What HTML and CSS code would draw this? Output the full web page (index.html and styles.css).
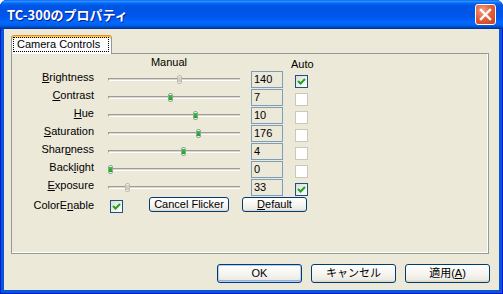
FILE: index.html
```html
<!DOCTYPE html>
<html lang="ja">
<head>
<meta charset="utf-8">
<link rel="stylesheet" href="styles.css">
</head>
<body>
<div class="window">
  <div class="titlebar">
    <span class="title">TC-300のプロパティ</span>
    <span class="close">
      <svg width="21" height="21" viewBox="0 0 21 21">
        <path d="M6 6 L15 15 M15 6 L6 15" stroke="#fff" stroke-width="2.4" stroke-linecap="square" fill="none"/>
      </svg>
    </span>
  </div>
  <div class="client">
    <div class="tabstrip">
      <div class="tab"><span class="tab-label">Camera Controls</span></div>
    </div>
    <div class="panel">
      <div class="controls">
        <div class="hdr-manual">Manual</div>
        <div class="hdr-auto">Auto</div>

        <div class="label"><u>B</u>rightness</div>
        <div class="slider"><div class="track"></div><div class="thumb off" style="--p:0.547"></div></div>
        <div class="edit">140</div>
        <span class="check on"><svg viewBox="0 0 11 11"><path d="M2 5 L4.5 7.5 L9 3"/></svg></span>

        <div class="label"><u>C</u>ontrast</div>
        <div class="slider"><div class="track"></div><div class="thumb" style="--p:0.472"></div></div>
        <div class="edit">7</div>
        <span class="check dis"></span>

        <div class="label"><u>H</u>ue</div>
        <div class="slider"><div class="track"></div><div class="thumb" style="--p:0.669"></div></div>
        <div class="edit">10</div>
        <span class="check dis"></span>

        <div class="label"><u>S</u>aturation</div>
        <div class="slider"><div class="track"></div><div class="thumb" style="--p:0.693"></div></div>
        <div class="edit">176</div>
        <span class="check dis"></span>

        <div class="label">Shar<u>p</u>ness</div>
        <div class="slider"><div class="track"></div><div class="thumb" style="--p:0.575"></div></div>
        <div class="edit">4</div>
        <span class="check dis"></span>

        <div class="label">Back<u>l</u>ight</div>
        <div class="slider"><div class="track"></div><div class="thumb" style="--p:0"></div></div>
        <div class="edit">0</div>
        <span class="check dis"></span>

        <div class="label"><u>E</u>xposure</div>
        <div class="slider"><div class="track"></div><div class="thumb off" style="--p:0.134"></div></div>
        <div class="edit">33</div>
        <span class="check on"><svg viewBox="0 0 11 11"><path d="M2 5 L4.5 7.5 L9 3"/></svg></span>

        <div class="label last">ColorE<u>n</u>able</div>
        <div class="bottom-row">
          <span class="check on ce"><svg viewBox="0 0 11 11"><path d="M2 5 L4.5 7.5 L9 3"/></svg></span>
          <button class="btn small flicker">Cancel Flicker</button>
          <button class="btn small default"><u>D</u>efault</button>
        </div>
      </div>
    </div>
    <div class="actions">
      <button class="btn big ok">OK</button>
      <button class="btn big">キャンセル</button>
      <button class="btn big">適用(<u>A</u>)</button>
    </div>
  </div>
</div>
</body>
</html>
```

FILE: styles.css
```css
* { box-sizing: border-box; }
html, body { margin: 0; padding: 0; background: #fff; }
body {
  width: 503px;
  height: 294px;
  overflow: hidden;
  font-family: "Liberation Sans", Arial, "Noto Sans CJK JP", sans-serif;
  font-size: 11px;
  color: #000;
}
.window {
  width: 503px;
  height: 294px;
  display: flex;
  flex-direction: column;
  background: #0855DD;
  border-radius: 7px 7px 0 0;
  overflow: hidden;
  box-shadow: inset 1px 0 0 #0019CF, inset -1px 0 0 #0019CF, inset 0 -1px 0 #0019CF;
}
.titlebar {
  height: 29px;
  flex: none;
  display: flex;
  align-items: center;
  justify-content: space-between;
  padding: 0 7px 0 7px;
  background: linear-gradient(to bottom,
    #0058EE 0%, #3593FF 4%, #288EFF 6%, #127DFF 8%, #036FFC 10%, #0262EE 14%,
    #0057E5 20%, #0054E3 24%, #0055EB 56%, #005BF5 66%, #026AFE 76%,
    #0062EF 86%, #0052D6 92%, #0040AB 96%, #003092 100%);
}
.title {
  font-family: "Noto Sans CJK JP", sans-serif;
  font-weight: 700;
  font-size: 13px;
  line-height: 29px;
  color: #fff;
  text-shadow: 1px 1px 0 #0A1E8C;
}
.close {
  width: 21px;
  height: 21px;
  display: block;
  border: 1px solid #fff;
  border-radius: 3px;
  background: radial-gradient(circle at 35% 30%, #F4A48A 0%, #E5603C 45%, #C8401C 100%);
}
.close svg { display: block; margin: -1px; }

.client {
  flex: 1;
  margin: 0 4px 4px;
  background: #ECE9D8;
  padding-top: 6px;
  display: flex;
  flex-direction: column;
}
.tabstrip {
  height: 18px;
  margin-left: 7px;
  position: relative;
  z-index: 1;
  display: flex;
}
.tab {
  width: 101px;
  height: 19px;
  border: 1px solid #919B9C;
  border-top: 1px solid #E68B2C;
  border-bottom: none;
  border-radius: 3px 3px 0 0;
  background: #FCFCFE;
  box-shadow: inset 0 1px 0 #FFC73C, inset 0 2px 0 #FFD76A;
  padding: 1px 0 0 1px;
}
.tab-label {
  display: block;
  width: 96px;
  height: 15px;
  border: 1px dotted #000;
  padding-left: 3px;
  line-height: 13px;
  font-size: 11px;
}
.panel {
  margin: 0 10px 0 7px;
  height: 201px;
  border: 1px solid #919B9C;
  background: #ECE9D8;
  box-shadow: inset -1px -1px 0 #fff;
}
.controls {
  display: grid;
  grid-template-columns: 96px 132px 43px 37px;
  grid-template-rows: 14px repeat(7, 18px) 20px;
}
.hdr-manual {
  grid-column: 2;
  text-align: center;
  padding-right: 10px;
  line-height: 14px;
  margin-top: 1px;
}
.hdr-auto {
  grid-column: 4;
  line-height: 14px;
  margin-top: 3px;
  margin-left: 8px;
}
.label {
  grid-column: 1;
  text-align: right;
  padding-right: 14px;
  line-height: 18px;
  white-space: nowrap;
}
.label.last { margin-top: 2px; }
.slider {
  grid-column: 2;
  position: relative;
  height: 18px;
}
.track {
  position: absolute;
  left: 0;
  right: 0;
  top: 10px;
  height: 3px;
  border-top: 1px solid #9D9C96;
  border-left: 1px solid #9D9C96;
  border-bottom: 1px solid #fff;
  background: #DAD8CE;
}
.thumb {
  position: absolute;
  top: 7px;
  left: calc(var(--p) * 127px);
  width: 5px;
  height: 9px;
  border: 1px solid #8FA89C;
  border-radius: 2px;
  background: linear-gradient(to bottom, #F2F8F2 0, #F2F8F2 1px, #3DBE3D 1px, #21A121 6px, #EEF6EE 6px);
}
.thumb.off {
  border-color: #BDBBB3;
  background: linear-gradient(to bottom, #F4F3EE 0, #F4F3EE 1px, #D4D2CA 1px, #CBC9C0 6px, #F4F3EE 6px);
}
.edit {
  grid-column: 3;
  justify-self: end;
  width: 32px;
  height: 17px;
  margin-top: 3px;
  border: 1px solid #7F9DB9;
  padding-left: 2px;
  line-height: 15px;
  background: #ECE9D8;
}
.check {
  display: block;
  width: 13px;
  height: 13px;
  margin-top: 7px;
  margin-left: 12px;
  border: 1px solid #1C5180;
  background: linear-gradient(135deg, #DCDCD7, #FFFFFF);
}
.check.dis {
  border-color: #CAC8BB;
  background: #fff;
}
.check svg { display: block; width: 11px; height: 11px; }
.check svg path { fill: none; stroke: #21A121; stroke-width: 2; }
.bottom-row {
  grid-column: 2 / 5;
  display: flex;
  align-items: flex-start;
}
.check.ce { margin: 6px 0 0 2px; }
.btn {
  font-family: "Liberation Sans", Arial, "Noto Sans CJK JP", sans-serif;
  font-size: 11px;
  color: #000;
  border: 1px solid #003C74;
  border-radius: 3px;
  background: linear-gradient(to bottom, #FFFFFF 0%, #F6F5F0 50%, #EDEBE3 85%, #D8D3C6 100%);
  padding: 0;
  margin: 0;
}
.btn.small {
  height: 15px;
  margin-top: 3px;
  line-height: 13px;
}
.btn.flicker { width: 80px; margin-left: 26px; }
.btn.default { width: 65px; margin-left: 13px; }
.actions {
  margin-top: 10px;
  display: flex;
  justify-content: flex-end;
  gap: 9px;
  padding-right: 9px;
}
.btn.big {
  width: 85px;
  height: 19px;
  line-height: 17px;
}
.btn.ok {
  box-shadow: inset 0 0 0 1px #B7CDF0, inset 0 -1px 0 1px #8EAFE6;
}
```
